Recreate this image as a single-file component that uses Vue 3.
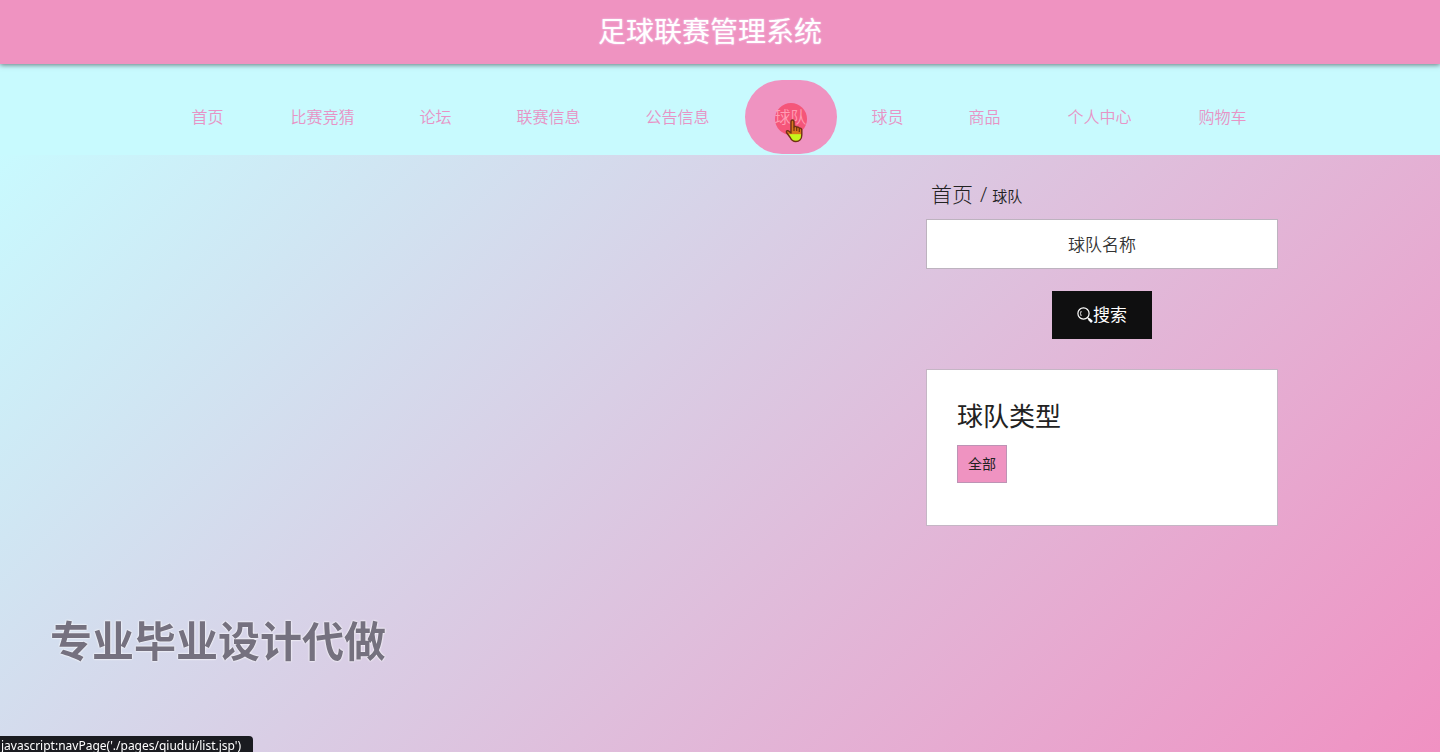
<template>
  <div class="page">
    <header class="header">
      <h1 class="title">足球联赛管理系统</h1>
    </header>

    <nav class="nav">
      <a
        v-for="item in menus"
        :key="item.name"
        :href="item.url"
        class="nav-item"
        :class="{ active: item.name === current, spaced: item.spaced }"
      >
        <span class="nav-text">{{ item.name }}</span>
        <span v-if="item.name === current" class="pointer">
          <svg class="hand" viewBox="0 0 18 24" width="18" height="24">
            <defs>
              <linearGradient id="handFill" x1="0" y1="0" x2="0" y2="1">
                <stop offset="0.64" stop-color="#d9781c" />
                <stop offset="0.68" stop-color="#c6f51c" />
              </linearGradient>
            </defs>
            <path
              d="M6 14V3c0-2.600 3-2.600 3 0v5c.5-1 2.500-.8 2.700.6.700-1 2.400-.6 2.600.8.900-.6 2.500 0 2.500 1.600v5c0 4-2.500 6.500-6 6.500-3 0-4.500-1.500-5.600-4L1.500 13.500c-.6-1.800 1.300-2.500 2.500-1.200z"
              fill="url(#handFill)"
              stroke="#6e3012"
              stroke-width="1.400"
              stroke-linejoin="round"
            />
            <path d="M9 8v4M11.700 9v3M14.300 10v3" fill="none" stroke="#6e3012" stroke-width="1.200" />
          </svg>
        </span>
      </a>
    </nav>

    <main class="container">
      <aside class="sidebar">
        <div class="breadcrumb">
          <a href="#" class="crumb-home">首页</a>
          <span class="crumb-line">/</span>
          <span class="crumb-current">球队</span>
        </div>

        <form class="search" @submit.prevent>
          <input
            v-model="keyword"
            class="search-input"
            type="text"
            placeholder="球队名称"
            aria-label="球队名称"
          />
          <button class="search-btn" type="submit">
            <svg viewBox="0 0 16 16" width="16" height="16" fill="none" stroke="#fff">
              <circle cx="6.500" cy="6.500" r="5.600" stroke-width="1.200" />
              <path d="M4.200 4Q2.800 6.500 4.200 9" stroke-width="0.900" />
              <path d="M10.600 10.600L12 12" stroke-width="1.200" />
              <path d="M11.800 11.800L15 15" stroke-width="2.600" />
            </svg>
            <span>搜索</span>
          </button>
        </form>

        <section class="card">
          <h2 class="card-title">球队类型</h2>
          <a v-for="type in types" :key="type" href="#" class="tag">{{ type }}</a>
        </section>
      </aside>
    </main>

    <div class="watermark">专业毕业设计代做</div>
    <div class="status">javascript:navPage('./pages/qiudui/list.jsp')</div>
  </div>
</template>

<script setup>
import { ref } from 'vue';

const current = ref('球队');
const keyword = ref('');
const types = ref(['全部']);

const menus = [
  { name: '首页', url: '#home' },
  { name: '比赛竞猜', url: '#jingcai', spaced: true },
  { name: '论坛', url: '#forum' },
  { name: '联赛信息', url: '#liansai' },
  { name: '公告信息', url: '#news' },
  { name: '球队', url: '#qiudui' },
  { name: '球员', url: '#qiuyuan' },
  { name: '商品', url: '#shangpin' },
  { name: '个人中心', url: '#center', spaced: true },
  { name: '购物车', url: '#cart', spaced: true }
];
</script>

<style>
body {
  margin: 0;
}
</style>

<style scoped>
.page {
  min-height: 100vh;
  background: linear-gradient(135deg, #c8fbff 6%, #f091c2 100%);
  font-family: "Open Sans", "Noto Sans CJK SC", sans-serif;
  font-weight: 350;
  color: #222;
}
.page * {
  box-sizing: border-box;
}
a {
  color: inherit;
  text-decoration: none;
}
.header {
  position: relative;
  z-index: 1;
  display: flex;
  align-items: center;
  justify-content: center;
  height: 64px;
  padding: 0 20px 2px 0;
  background: #ef93c1;
  box-shadow: 0 1px 5px rgba(0, 0, 0, 0.5);
}
.title {
  margin: 0;
  font-size: 28px;
  line-height: 40px;
  font-weight: 400;
  color: #fff;
  text-shadow: 0 0 2px #f3d8f5;
}
.nav {
  display: flex;
  justify-content: center;
  gap: 5px;
  padding: 16px 2px 1px 0;
  background: #c8fafe;
}
.nav-item {
  position: relative;
  padding: 0 30px;
  border-radius: 40px;
  font-size: 16px;
  line-height: 74px;
  white-space: nowrap;
  color: #e793c5;
}
.nav-item.spaced {
  margin-left: 2px;
}
.nav-item.active {
  background: #ef93c1;
  color: #ff9db4;
}
.nav-text {
  position: relative;
  z-index: 1;
}
.pointer {
  position: absolute;
  left: 50%;
  top: 50%;
  width: 32px;
  height: 32px;
  margin: -14px 0 0 -16px;
  border-radius: 50%;
  background: #f5567a;
}
.hand {
  position: absolute;
  z-index: 2;
  left: 10px;
  top: 16px;
}
.container {
  display: flex;
  justify-content: flex-end;
  max-width: 1116px;
  margin: 0 auto;
  padding-top: 23px;
}
.sidebar {
  width: 352px;
}
.breadcrumb {
  display: flex;
  align-items: baseline;
  height: 41px;
  padding-left: 5px;
  line-height: 32px;
}
.crumb-home,
.crumb-line {
  font-size: 21px;
}
.crumb-home {
  font-weight: 300;
}
.crumb-line {
  margin: 0 5px 0 7px;
}
.crumb-current {
  font-size: 15px;
}
.search {
  display: flex;
  flex-direction: column;
  align-items: center;
  gap: 22px;
  margin-bottom: 30px;
}
.search-input {
  width: 100%;
  height: 50px;
  padding: 0 12px;
  border: 1px solid #bdb3bf;
  border-radius: 0;
  background: #fff;
  font: inherit;
  font-size: 17px;
  text-align: center;
  outline: none;
}
.search-input::placeholder {
  color: #333;
  opacity: 1;
}
.search-btn {
  display: flex;
  align-items: center;
  justify-content: center;
  height: 48px;
  padding: 0 25px;
  border: 0;
  background: #0f0f10;
  color: #fff;
  font: inherit;
  font-size: 17px;
  line-height: 24px;
  font-weight: 400;
}
.card {
  padding: 26px 30px 42px;
  border: 1px solid #c5b6c5;
  background: #fff;
}
.card-title {
  margin: 0 0 9px;
  font-size: 26px;
  line-height: 40px;
  font-weight: 400;
}
.tag {
  display: inline-block;
  padding: 0 10px;
  border: 1px solid #bd93b5;
  background: #ef93c1;
  font-size: 14px;
  line-height: 36px;
  font-weight: 400;
}
.watermark {
  position: fixed;
  left: 50px;
  bottom: 81px;
  font-size: 42px;
  line-height: 60px;
  font-weight: 700;
  color: #75717f;
  text-shadow: 0 0 2px #fff, 0 0 2px #fff;
}
.status {
  position: fixed;
  left: 0;
  bottom: 0;
  padding: 3px 12px 0 1px;
  border-top-right-radius: 4px;
  background: #1a1b20;
  color: #fff;
  font-family: "Noto Sans", sans-serif;
  font-size: 12px;
  line-height: 13px;
  font-weight: 400;
}
</style>
